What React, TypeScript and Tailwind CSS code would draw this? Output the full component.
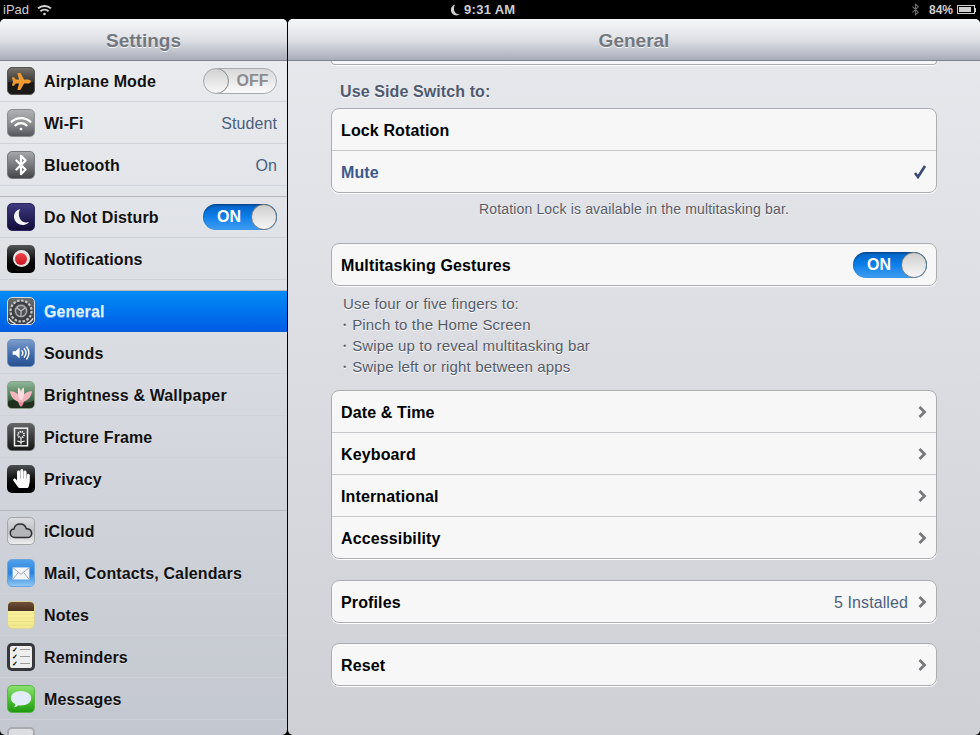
import type { ReactNode } from "react";
import { Bluetooth } from "lucide-react";
import { FaPlane, FaHandPaper } from "react-icons/fa";

const FONT = "font-['Liberation_Sans',Arial,sans-serif]";

function IconBox({ className, children }: { className: string; children?: ReactNode }) {
  return (
    <div className={`relative flex h-[28px] w-[28px] shrink-0 items-center justify-center overflow-hidden rounded-[5px] ${className}`}>
      {children}
    </div>
  );
}

const icons: Record<string, ReactNode> = {
  airplane: (
    <IconBox className="border border-[#555] bg-[#1b1a18]">
      <div className="absolute inset-x-0 top-0 h-[14px] bg-gradient-to-b from-[#77736c] to-[#3a3834]" />
      <FaPlane className="relative h-[19px] w-[19px] text-[#ee9a30]" />
    </IconBox>
  ),
  wifi: (
    <IconBox className="border border-[#8b8d91] bg-gradient-to-b from-[#b0b2b6] via-[#8d8f93] to-[#55575c]">
      <svg viewBox="0 0 28 28" className="relative h-full w-full" fill="none" stroke="#fff" strokeLinecap="round">
        <path d="M4 12.500c5.500-5 14.500-5 20 0" strokeWidth="2.600" />
        <path d="M8 16.500c3.400-3 8.600-3 12 0" strokeWidth="2.400" />
        <circle cx="14" cy="20.500" r="1.500" fill="#fff" stroke="none" />
      </svg>
    </IconBox>
  ),
  bluetooth: (
    <IconBox className="border border-[#77797d] bg-gradient-to-b from-[#a4a6aa] via-[#77797d] to-[#44464a]">
      <Bluetooth className="h-[22px] w-[22px] text-white" strokeWidth={2.4} />
    </IconBox>
  ),
  moon: (
    <IconBox className="border border-[#2c2a5c] bg-gradient-to-b from-[#3e3a80] to-[#120c3a]">
      <svg viewBox="0 0 28 28" className="h-full w-full">
        <path d="M13 5.500c-5 1.500-7.500 6-6.200 10.500 1.400 5 6.600 7.600 11.200 6.400 2-.5 3.600-1.600 4.600-3-4 1.400-8-.2-9.800-3.800-1.600-3.400-1.400-7 .2-10.100z" fill="#f2f2f6" />
      </svg>
    </IconBox>
  ),
  notifications: (
    <IconBox className="bg-gradient-to-b from-[#55575a] via-[#121212] to-black">
      <div className="flex h-[17px] w-[17px] items-center justify-center rounded-full bg-[#e9e4e4]">
        <div className="h-[12px] w-[12px] rounded-full bg-gradient-to-b from-[#f0434a] to-[#c8101c]" />
      </div>
    </IconBox>
  ),
  general: (
    <IconBox className="border border-[#d6dde6] bg-gradient-to-b from-[#6a6d70] to-[#3a3c40]">
      <svg viewBox="0 0 28 28" className="h-full w-full" fill="none">
        <circle cx="14" cy="14" r="11" stroke="#c4c5c7" strokeWidth="3" strokeDasharray="2.600 1.700" />
        <circle cx="14" cy="14" r="9" stroke="#3c3d40" strokeWidth="2.400" />
        <circle cx="14" cy="14" r="6" stroke="#a8aaad" strokeWidth="1.500" />
        <path d="M14 14 9.500 10.500M14 14l4.500-3.500M14 14v5.500" stroke="#bcbec0" strokeWidth="1.300" />
        <path d="M1 22c2 3.500 4 5 7 5.500M27 22c-2 3.500-4 5-7 5.500" stroke="#e6e7e8" strokeWidth="1.500" />
      </svg>
    </IconBox>
  ),
  sounds: (
    <IconBox className="border border-[#6f8fc0] bg-gradient-to-b from-[#7d9ccb] via-[#466fae] to-[#26508f]">
      <svg viewBox="0 0 28 28" className="h-full w-full" fill="none" stroke="#fff" strokeLinecap="round">
        <path d="M5 12h3l4.500-4v12L8 16H5z" fill="#fff" stroke="none" />
        <path d="M15 11.500c1.200 1.500 1.200 3.500 0 5" strokeWidth="1.500" />
        <path d="M17.600 9.500c2.200 2.700 2.200 6.300 0 9" strokeWidth="1.500" />
        <path d="M20.200 7.500c3 3.800 3 9.200 0 13" strokeWidth="1.500" />
      </svg>
    </IconBox>
  ),
  brightness: (
    <IconBox className="border border-[#8d9d8c] bg-gradient-to-b from-[#8db898] via-[#52805c] to-[#2c3f2e]">
      <svg viewBox="0 0 28 28" className="h-full w-full">
        <path d="M0 21c5-3 9-2 14 0s10 1 14-1v8H0z" fill="#20301f" />
        <path d="M14 27c-3-3-4-7-3-12l3-3 3 3c1 5 0 9-3 12z" fill="#e88b9a" />
        <path d="M14 22C8 21 3 17 2 10c5 0 9 2 11 6zM14 22c6-1 11-5 12-12-5 0-9 2-11 6z" fill="#f3b5bd" />
        <path d="M14 20c-3-2-4-7-3-14 2 1 3 3 3 5 0-2 1-4 3-5 1 7 0 12-3 14z" fill="#fadde0" />
      </svg>
    </IconBox>
  ),
  frame: (
    <IconBox className="border border-[#666] bg-gradient-to-b from-[#626466] to-[#171717]">
      <svg viewBox="0 0 28 28" className="h-full w-full" fill="none">
        <rect x="7" y="4.500" width="14" height="19" stroke="#f2f2f2" strokeWidth="1.600" />
        <circle cx="14" cy="11.500" r="3.200" stroke="#f2f2f2" strokeWidth="2" strokeDasharray="1.400 .8" />
        <path d="M14 15v7M14 20c-1.500-1.400-2.500-1.600-4-1.600M14 20c1.500-1.400 2.500-1.600 4-1.600" stroke="#f2f2f2" strokeWidth="1.200" />
      </svg>
    </IconBox>
  ),
  privacy: (
    <IconBox className="bg-gradient-to-b from-[#4d4f52] via-[#111] to-black">
      <FaHandPaper className="h-[19px] w-[19px] text-white" />
    </IconBox>
  ),
  icloud: (
    <IconBox className="border border-[#a5a6a8] bg-gradient-to-b from-[#dcdde0] via-[#bfc0c3] to-[#eeeeef]">
      <svg viewBox="0 0 28 28" className="h-full w-full">
        <path d="M7.500 21c-3 0-5-2-5-4.600 0-2.400 1.700-4.200 3.900-4.500C7 8.600 9.800 6.500 13 6.500c3.300 0 6 2.200 6.800 5.200 3-.2 5.700 1.800 5.700 4.600 0 2.700-2 4.700-5 4.700z" fill="#b4b5b8" stroke="#2e2e30" strokeWidth="1.600" />
      </svg>
    </IconBox>
  ),
  mail: (
    <IconBox className="border border-[#6aa5e0] bg-gradient-to-b from-[#4fa0ea] via-[#2a82dc] to-[#8cc8f2]">
      <svg viewBox="0 0 28 28" className="h-full w-full">
        <rect x="5" y="8" width="18" height="13" fill="#f4f5f7" />
        <path d="M5 8l9 7.500L23 8M5 21l6.500-8M23 21l-6.500-8" fill="none" stroke="#9aa2b0" strokeWidth="1" />
      </svg>
    </IconBox>
  ),
  notes: (
    <IconBox className="border border-[#d8d29c] bg-gradient-to-b from-[#fdf6a8] to-[#f3e88a]">
      <div className="absolute inset-x-0 top-0 h-[9px] bg-gradient-to-b from-[#6f5038] to-[#4a3020]" />
      <svg viewBox="0 0 28 28" className="absolute inset-0 h-full w-full" stroke="#e6dc8c" strokeWidth=".8">
        <path d="M0 13h28M0 17h28M0 21h28M0 25h28" />
      </svg>
    </IconBox>
  ),
  reminders: (
    <IconBox className="bg-[#37383b]">
      <div className="flex h-[22px] w-[22px] flex-col justify-around rounded-[2px] bg-[#eeeeee] px-[2px]">
        {[0, 1, 2].map((i) => (
          <div key={i} className="flex items-center gap-[2px]">
            <span className="text-[7px] leading-none font-bold text-black">✓</span>
            <div className="h-[1px] flex-1 bg-[#9a9a9a]" />
          </div>
        ))}
      </div>
    </IconBox>
  ),
  messages: (
    <IconBox className="border border-[#58b548] bg-gradient-to-b from-[#8ce070] via-[#4ec232] to-[#1f9a10]">
      <svg viewBox="0 0 28 28" className="h-full w-full">
        <path d="M14 5.500c6.200 0 11 3.300 11 7.800s-4.800 7.800-11 7.800c-1 0-2-.1-2.900-.3-1.300 1.300-3 2-4.900 2.200 1-.9 1.600-2 1.800-3.400C5 18.300 3 16 3 13.300c0-4.500 4.800-7.800 11-7.800z" fill="#e2ecf6" />
      </svg>
    </IconBox>
  ),
  facetime: <IconBox className="border-2 border-[#a9abb0] bg-[#dcdde0]" />,
};

type SideRow = { icon: string; label: string; value?: string; toggle?: "on" | "off"; active?: boolean };

const sideGroups: SideRow[][] = [
  [
    { icon: "airplane", label: "Airplane Mode", toggle: "off" },
    { icon: "wifi", label: "Wi-Fi", value: "Student" },
    { icon: "bluetooth", label: "Bluetooth", value: "On" },
  ],
  [
    { icon: "moon", label: "Do Not Disturb", toggle: "on" },
    { icon: "notifications", label: "Notifications" },
  ],
  [
    { icon: "general", label: "General", active: true },
    { icon: "sounds", label: "Sounds" },
    { icon: "brightness", label: "Brightness & Wallpaper" },
    { icon: "frame", label: "Picture Frame" },
    { icon: "privacy", label: "Privacy" },
  ],
  [
    { icon: "icloud", label: "iCloud" },
    { icon: "mail", label: "Mail, Contacts, Calendars" },
    { icon: "notes", label: "Notes" },
    { icon: "reminders", label: "Reminders" },
    { icon: "messages", label: "Messages" },
    { icon: "facetime", label: "" },
  ],
];

function Toggle({ on }: { on: boolean }) {
  if (on) {
    return (
      <div className="relative flex h-[26px] w-[74px] shrink-0 items-center overflow-hidden rounded-full bg-gradient-to-b from-[#0561c4] via-[#0a80ea] to-[#3d9df0] shadow-[inset_0_1px_2px_rgba(0,0,0,0.4)]">
        <span className="w-[52px] text-center text-[16px] font-bold text-white">ON</span>
        <div className="absolute top-0 right-0 h-[26px] w-[26px] rounded-full border border-[#7d7d7d] bg-gradient-to-b from-[#cfcfcf] to-[#f7f7f7]" />
      </div>
    );
  }
  return (
    <div className="relative flex h-[26px] w-[74px] shrink-0 items-center justify-end overflow-hidden rounded-full border border-[#a9abaf] bg-gradient-to-b from-[#d9d9d9] to-[#fafafa]">
      <span className="w-[47px] text-center text-[16px] font-bold text-[#8b8d90]">OFF</span>
      <div className="absolute top-[-1px] left-[-1px] h-[26px] w-[26px] rounded-full border border-[#8a8a8a] bg-gradient-to-b from-[#d2d2d2] to-[#f8f8f8]" />
    </div>
  );
}

function Sidebar() {
  return (
    <div className="flex w-[287px] shrink-0 flex-col overflow-hidden rounded-[5px] bg-gradient-to-b from-[#eceef1] to-[#c3c7cf]">
      <Header title="Settings" />
      {sideGroups.map((group, gi) => (
        <div key={gi} className={gi === 0 ? "" : "mt-[10px] border-t border-[#b4b7be]"}>
          {group.map((row, ri) => {
            const h = ri === 0 ? "h-[41px]" : "h-[42px]";
            return (
              <div
                key={row.icon}
                className={`flex ${h} items-center gap-[9px] border-b pr-[10px] pl-[7px] ${
                  row.active
                    ? "border-[#0a5fd0] bg-gradient-to-b from-[#058bf5] to-[#015ce6]"
                    : "border-[#cfd2d8]"
                }`}
              >
                {icons[row.icon]}
                <span className={`flex-1 pt-[2px] text-[16px] leading-none font-bold tracking-[0.13px] ${row.active ? "text-[#e0f1ff]" : "text-[#111]"} [text-shadow:0_1px_0_rgba(255,255,255,0.4)]`}>
                  {row.label}
                </span>
                {row.value && <span className="pt-[2px] text-[16px] leading-none tracking-[0.1px] text-[#4b5f80]">{row.value}</span>}
                {row.toggle && <Toggle on={row.toggle === "on"} />}
              </div>
            );
          })}
        </div>
      ))}
    </div>
  );
}

function Header({ title }: { title: string }) {
  return (
    <div className="flex h-[42px] shrink-0 items-center justify-center border-b border-[#7f838d] bg-gradient-to-b from-[#f6f7f8] via-[#dfe1e6] to-[#a9adb9] pt-[3px]">
      <span className="text-[19px] font-bold text-[#73787f] [text-shadow:0_1px_0_rgba(255,255,255,0.8)]">{title}</span>
    </div>
  );
}

function Chevron() {
  return (
    <svg viewBox="0 0 9 12" className="h-[12px] w-[9px] shrink-0" fill="none" stroke="#77797d" strokeWidth="2.800">
      <path d="M1.500 1l5 5-5 5" />
    </svg>
  );
}

function Group({ children, className = "" }: { children: ReactNode; className?: string }) {
  return (
    <div className={`rounded-[8px] border border-[#abadb3] bg-[#f7f7f8] shadow-[0_1px_0_#fff] ${className}`}>{children}</div>
  );
}

function Row({ label, last, children, labelClass = "text-black" }: { label: string; last?: boolean; children?: ReactNode; labelClass?: string }) {
  return (
    <div className={`flex items-center px-[9px] ${last ? "h-[41px]" : "h-[42px] border-b border-[#c6c8cc]"}`}>
      <span className={`flex-1 pt-[2px] text-[16px] font-bold tracking-[0.13px] ${labelClass}`}>{label}</span>
      {children}
    </div>
  );
}

function Main() {
  return (
    <div className="flex flex-1 flex-col overflow-hidden rounded-[5px] bg-gradient-to-b from-[#e7e9ed] to-[#cfd0d6]">
      <Header title="General" />
      <div className="flex flex-col px-[43px]">
        <div className="h-[4px] rounded-b-[6px] border-x border-b border-[#abadb3] bg-[#f7f7f8] shadow-[0_1px_0_#fff]" />
        <p className="mt-[17px] pl-[9px] text-[16px] leading-[20px] font-bold tracking-[0.1px] text-[#4f5970] [text-shadow:0_1px_0_#fff]">Use Side Switch to:</p>
        <Group className="mt-[6px]">
          <Row label="Lock Rotation" />
          <Row label="Mute" last labelClass="text-[#3e5a8c]">
            <svg viewBox="0 0 14 14" className="h-[14px] w-[14px]" fill="none" stroke="#3a4a75" strokeWidth="2.600">
              <path d="M2 8l3 4 7-11" />
            </svg>
          </Row>
        </Group>
        <p className="mt-[8px] text-center text-[14px] leading-[16px] tracking-[0.16px] text-[#565b67] [text-shadow:0_1px_0_#fff]">Rotation Lock is available in the multitasking bar.</p>
        <Group className="mt-[26px]">
          <Row label="Multitasking Gestures" last>
            <Toggle on />
          </Row>
        </Group>
        <div className="mt-[7px] pl-[12px] text-[15px] leading-[21px] tracking-[0.15px] text-[#555a66] [text-shadow:0_1px_0_#fff]">
          <p>Use four or five fingers to:</p>
          <p className="ml-[-6px]">・Pinch to the Home Screen</p>
          <p className="ml-[-6px]">・Swipe up to reveal multitasking bar</p>
          <p className="ml-[-6px]">・Swipe left or right between apps</p>
        </div>
        <Group className="mt-[13px]">
          {["Date & Time", "Keyboard", "International", "Accessibility"].map((l, i) => (
            <Row key={l} label={l} last={i === 3}>
              <Chevron />
            </Row>
          ))}
        </Group>
        <Group className="mt-[21px]">
          <Row label="Profiles" last>
            <span className="mr-[10px] pt-[2px] text-[16px] tracking-[0.1px] text-[#4b5f80]">5 Installed</span>
            <Chevron />
          </Row>
        </Group>
        <Group className="mt-[20px]">
          <Row label="Reset" last>
            <Chevron />
          </Row>
        </Group>
      </div>
    </div>
  );
}

function StatusBar() {
  return (
    <div className="relative flex h-[19px] shrink-0 items-center justify-between bg-black px-[3px] text-[13px] text-[#cfcfcf]">
      <div className="flex items-center gap-[8px]">
        <span>iPad</span>
        <svg viewBox="0 0 14 11" className="h-[12px] w-[15px]" fill="none" stroke="#d8d8d8" strokeWidth="1.800">
          <path d="M1 4c3.400-3 8.600-3 12 0M3.200 6.600c2.200-1.900 5.400-1.900 7.600 0" />
          <circle cx="7" cy="9.300" r="1.200" fill="#d8d8d8" stroke="none" />
        </svg>
      </div>
      <div className="absolute top-0 left-[450px] flex h-[19px] items-center gap-[4px]">
        <svg viewBox="0 0 10 12" className="h-[12px] w-[10px]">
          <path d="M5 .5C2 1.500.5 4 1 7c.6 3 3.500 5 6.500 4.300 1-.2 1.700-.7 2.300-1.300C7.500 10.500 5.500 9.500 4.500 7.500 3.700 5.500 3.800 2.800 5 .5z" fill="#cfcfcf" />
        </svg>
        <span className="font-bold tracking-[0.3px]">9:31 AM</span>
      </div>
      <div className="flex items-center gap-[4px] pr-[1px]">
        <Bluetooth className="h-[15px] w-[13px] text-[#6f6f6f]" strokeWidth={2} />
        <span className="ml-[3px] text-[12px] font-bold">84%</span>
        <div className="flex items-center">
          <div className="h-[9px] w-[18px] border border-[#cfcfcf] p-[1px]">
            <div className="h-full w-[84%] bg-[#cfcfcf]" />
          </div>
          <div className="h-[4px] w-[1px] bg-[#cfcfcf]" />
        </div>
      </div>
    </div>
  );
}

export default function App() {
  return (
    <div className={`flex h-[735px] w-[980px] flex-col overflow-hidden bg-black ${FONT}`}>
      <StatusBar />
      <div className="flex min-h-0 flex-1 gap-[1px]">
        <Sidebar />
        <Main />
      </div>
    </div>
  );
}
